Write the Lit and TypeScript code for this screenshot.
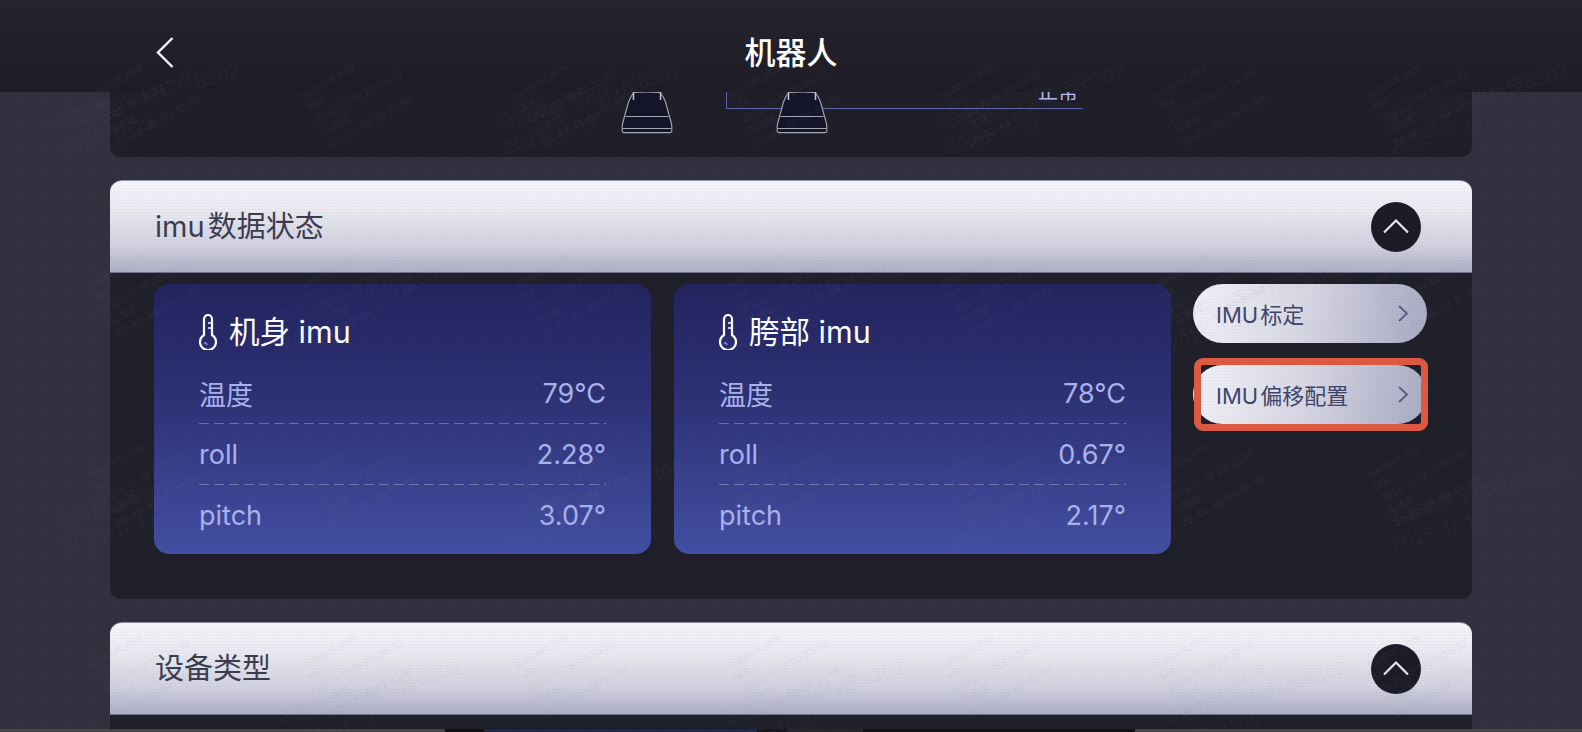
import { LitElement, html, css, svg } from "lit";
import { customElement } from "lit/decorators.js";

const ImuCards = [
  { name: "机身 imu", temp: "79°C", roll: "2.28°", pitch: "3.07°" },
  { name: "胯部 imu", temp: "78°C", roll: "0.67°", pitch: "2.17°" },
];

const strip = [
  { w: 445, c: "#47474a" },
  { w: 39, c: "#121214" },
  { w: 273, c: "#1b2850" },
  { w: 30, c: "#17171d" },
  { w: 76, c: "#26262b" },
  { w: 272, c: "#131315" },
  { w: 447, c: "#47474a" },
];

const bigMarks: { x: number; y: number }[] = [];
[[123, 53], [320, 275], [520, 55], [720, 275]].forEach(([y, x0]) => {
  for (let i = 0; i < 4; i++) {
    const x = x0 + 443 * i;
    if (x < 1400) bigMarks.push({ x, y: y - 13 });
  }
});
const smallMarks: { x: number; y: number }[] = [];
for (let j = 0; j < 4; j++) {
  for (let i = 0; i < 7; i++) smallMarks.push({ x: 89 + 213 * i, y: 88 + 190 * j });
}

const foot = svg`<path d="M13 0.5 Q25.5 -0.5 38 0.5 L39.5 1 C42 4 43.5 7 44.5 10 L50 30 Q50.8 33 50.8 35 V39 Q50.8 40.6 49 40.6 H3 Q1.2 40.6 1.2 39 V35 Q1.2 33 2 30 L7.5 10 C8.5 7 10 4 12.5 1 Z" fill="#15152a" stroke="#a9a9b6" stroke-width="1.1"/>
  <path d="M4.5 24.5H47.5" stroke="#a9a9b6" stroke-width="1.1" fill="none"/>
  <path d="M1.5 36.5H50.5" stroke="#a9a9b6" stroke-width="1.1" fill="none"/>
  <path d="M12.5 0V8M39.5 0V8" stroke="#c6c6d0" stroke-width="1.5" fill="none"/>`;

@customElement("app-root")
export class AppRoot extends LitElement {
  static styles = css`
    :host {
      display: block;
      width: 1582px;
      height: 732px;
      overflow: hidden;
      font-family: Inter, "Noto Sans CJK SC", sans-serif;
    }
    .page {
      position: relative;
      height: 732px;
      display: flex;
      flex-direction: column;
      background: #32313f;
      overflow: hidden;
    }
    .topbar {
      flex: 0 0 92px;
      display: grid;
      grid-template-columns: 1fr auto 1fr;
      align-items: center;
      padding: 13px 156px 0;
      box-sizing: border-box;
      background: linear-gradient(180deg, #25242f 0%, #1e1d27 100%);
    }
    .back {
      width: 18px;
      height: 31px;
      display: block;
    }
    .title {
      color: #fff;
      font-size: 31px;
      font-weight: 500;
      line-height: 40px;
    }
    .main {
      flex: 1;
      min-height: 0;
      overflow: hidden;
      padding: 0 110px;
      display: flex;
      flex-direction: column;
      gap: 23px;
    }
    .clipped {
      flex: 0 0 65px;
      position: relative;
      overflow: hidden;
      background: #1f1e29;
      border-radius: 0 0 10px 10px;
    }
    .foot {
      position: absolute;
      top: 0;
      width: 52px;
      height: 42px;
      overflow: visible;
    }
    .foot.a { left: 511px; }
    .foot.b { left: 666px; }
    .link {
      position: absolute;
      left: 616px;
      top: -20px;
      width: 356px;
      height: 36px;
      border-left: 1.5px solid #5d68a6;
      border-bottom: 1.5px solid #5d68a6;
    }
    .status {
      position: absolute;
      left: 928px;
      top: -13px;
      font-size: 20px;
      line-height: 26px;
      color: #b4bcf2;
    }
    .section {
      flex: none;
      background: #20202b;
      border-radius: 12px 12px 10px 10px;
    }
    .section.wide { height: 419px; }
    .section.tail { flex: 1; min-height: 0; border-radius: 12px 12px 0 0; }
    .head {
      height: 93px;
      box-sizing: border-box;
      display: flex;
      align-items: center;
      justify-content: space-between;
      padding: 0 51px 0 45px;
      border-radius: 12px 12px 0 0;
      border-top: 1px solid #8e8ea6;
      border-bottom: 1.5px solid #74748e;
      background: linear-gradient(180deg, #f6f6fb 0%, #e8e8f0 35%, #d2d2e1 70%, #afafc6 100%);
      color: #3c3c50;
      font-size: 29px;
      line-height: 36px;
      word-spacing: -5px;
    }
    .toggle {
      width: 50px;
      height: 50px;
      border-radius: 50%;
      background: #1c1c29;
      display: flex;
      align-items: center;
      justify-content: center;
    }
    .toggle svg { width: 28px; height: 16px; display: block; margin-top: -2px; }
    .body {
      display: flex;
      gap: 23px;
      padding: 11px 45px 0 44px;
    }
    .card {
      width: 497px;
      height: 270px;
      box-sizing: border-box;
      padding: 29px 45px 0;
      border-radius: 15px;
      background: linear-gradient(180deg, #23245f 0%, #2d3174 40%, #434fa4 100%);
    }
    .card-title {
      display: flex;
      align-items: center;
      gap: 12px;
      height: 38px;
      color: #fff;
      font-size: 30.5px;
      line-height: 38px;
    }
    .thermo { width: 18px; height: 36px; flex: none; display: block; }
    .rows { margin-top: 12px; }
    .row {
      display: flex;
      justify-content: space-between;
      align-items: center;
      height: 61px;
      box-sizing: border-box;
      color: #a9b3ee;
      font-size: 27px;
      background: repeating-linear-gradient(90deg, rgba(175, 175, 195, 0.48) 0 10px, transparent 10px 15px) bottom / 100% 1.2px no-repeat;
    }
    .row:last-child { background: none; }
    .actions {
      display: flex;
      flex-direction: column;
      gap: 22px;
      margin-left: -1px;
    }
    .action {
      position: relative;
      width: 234px;
      height: 59px;
      box-sizing: border-box;
      padding: 0 19px 0 23px;
      border-radius: 30px;
      display: flex;
      align-items: center;
      justify-content: space-between;
      background: linear-gradient(100deg, #f2f2f8 0%, #d9d9e6 45%, #a9a9c3 100%);
      color: #40466c;
      font-size: 22px;
      word-spacing: -4px;
      white-space: nowrap;
    }
    .action span { margin-top: -2px; }
    .action svg { width: 10px; height: 17px; display: block; }
    .mark {
      position: absolute;
      left: 1px;
      top: -7px;
      width: 234px;
      height: 73px;
      box-sizing: border-box;
      border: 7.5px solid #df5a42;
      border-radius: 9px;
    }
    .strip { flex: 0 0 3px; display: flex; }
    .strip span { display: block; height: 3px; }
    .overlay {
      position: absolute;
      inset: 0;
      pointer-events: none;
      overflow: hidden;
    }
    .big, .small {
      position: absolute;
      white-space: nowrap;
    }
    .big {
      color: rgba(132, 132, 152, 0.07);
      font-size: 18.5px;
      line-height: 26px;
      transform: rotate(-16deg);
      transform-origin: 0 13px;
    }
    .small {
      color: rgba(132, 132, 152, 0.12);
      font-size: 10px;
      line-height: 14px;
      transform: rotate(-29deg);
      transform-origin: 0 7px;
    }
    .texture {
      position: absolute;
      inset: 0;
      pointer-events: none;
      background:
        repeating-linear-gradient(0deg, rgba(0, 0, 0, 0.018) 0 1px, transparent 1px 3px),
        repeating-linear-gradient(90deg, rgba(0, 0, 0, 0.012) 0 1px, transparent 1px 3px);
    }
  `;

  private chevron() {
    return html`<svg viewBox="0 0 10 17" fill="none"><path d="M1 1l8 7.5L1 16" stroke="#565b80" stroke-width="1.8"/></svg>`;
  }

  private head(label: string) {
    return html`<div class="head">
      <span>${label}</span>
      <div class="toggle">
        <svg viewBox="0 0 28 16" fill="none"><path d="M2 14.5L14 2.5l12 12" stroke="#e8e8ee" stroke-width="2.2"/></svg>
      </div>
    </div>`;
  }

  private card(c: (typeof ImuCards)[number]) {
    return html`<div class="card">
      <div class="card-title">
        <svg class="thermo" viewBox="0 0 18 36" fill="none" stroke="#fff" stroke-width="2.2">
          <path d="M5 21.07V5a4 4 0 0 1 8 0v16.07a8 8 0 1 1-8 0Z"/>
          <path d="M9 9h4M9 14h4" stroke-width="1.6"/>
          <path d="M5.5 28a4 4 0 0 0 3 2.6" stroke="#7f8bf0" stroke-width="2"/>
        </svg>
        <span>${c.name}</span>
      </div>
      <div class="rows">
        <div class="row"><span>温度</span><span>${c.temp}</span></div>
        <div class="row"><span>roll</span><span>${c.roll}</span></div>
        <div class="row"><span>pitch</span><span>${c.pitch}</span></div>
      </div>
    </div>`;
  }

  render() {
    return html`<div class="page">
      <header class="topbar">
        <svg class="back" viewBox="0 0 18 31" fill="none"><path d="M16.5 1L2 15.5 16.5 30" stroke="#f4f4f6" stroke-width="2.4"/></svg>
        <div class="title">机器人</div>
        <span></span>
      </header>
      <main class="main">
        <div class="clipped">
          <svg class="foot a" viewBox="0 0 52 42">${foot}</svg>
          <div class="link"></div>
          <svg class="foot b" viewBox="0 0 52 42">${foot}</svg>
          <div class="status">正常</div>
        </div>
        <section class="section wide">
          ${this.head("imu 数据状态")}
          <div class="body">
            ${ImuCards.map((c) => this.card(c))}
            <div class="actions">
              <div class="action"><span>IMU 标定</span>${this.chevron()}</div>
              <div class="action">
                <span>IMU 偏移配置</span>${this.chevron()}
                <div class="mark"></div>
              </div>
            </div>
          </div>
        </section>
        <section class="section tail">${this.head("设备类型")}</section>
      </main>
      <div class="strip">
        ${strip.map((s) => html`<span style="width:${s.w}px;background:${s.c}"></span>`)}
      </div>
      <div class="overlay">
        ${bigMarks.map(
          (m) => html`<div class="big" style="left:${m.x}px;top:${m.y}px">马浩斌@宇树科技8302<br />2025-11-19</div>`
        )}
        ${smallMarks.map(
          (m) => html`<div class="small" style="left:${m.x}px;top:${m.y}px">support_mdr<br />MA<br />2025-11-19 20:35:30<br />马浩斌<br />20-40-48-89-81-98</div>`
        )}
      </div>
      <div class="texture"></div>
    </div>`;
  }
}
